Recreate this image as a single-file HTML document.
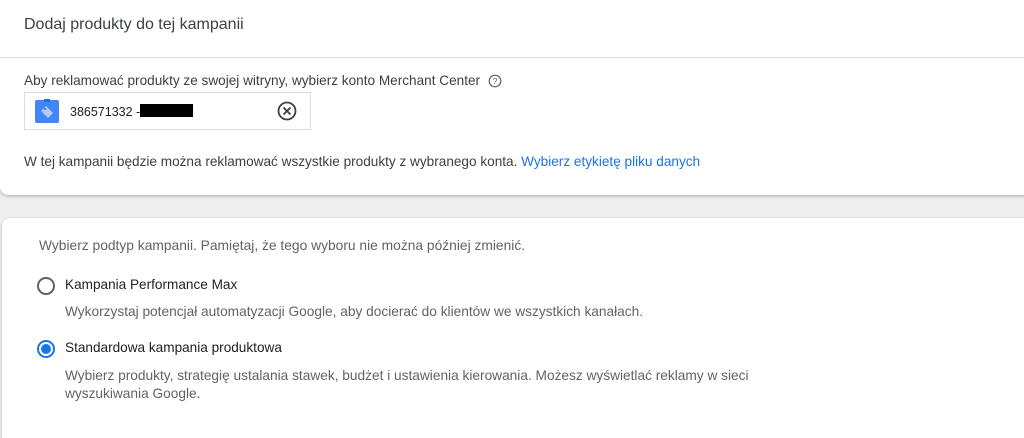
<!DOCTYPE html>
<html><head><meta charset="utf-8"><style>
body{margin:0;width:1024px;height:423px;background:#eeeff1;font-family:"Liberation Sans",Arial,sans-serif;overflow:hidden;position:relative;color:#3c4043}
.c1{position:absolute;left:0;top:0;width:1026px;height:195px;background:#fff;border-radius:0 0 0 8px;box-shadow:0 1px 3px rgba(0,0,0,.3)}
.c2{position:absolute;left:2px;top:218px;width:1030px;height:220px;background:#fff;border-radius:8px 0 0 0;box-shadow:0 1px 3px rgba(0,0,0,.25)}
.t{position:absolute;white-space:nowrap}
</style></head><body>
<div class="c1">
<div class="t" style="left:24px;top:16px;font-size:16px;color:#3c4043">Dodaj produkty do tej kampanii</div>
<div style="position:absolute;left:0;top:57px;width:1026px;height:1px;background:#e0e0e0"></div>
<div class="t" style="left:24px;top:73px;font-size:13.6px">Aby reklamować produkty ze swojej witryny, wybierz konto Merchant Center</div>
<svg style="position:absolute;left:488px;top:74px" width="14" height="14" viewBox="0 0 14 14"><circle cx="7" cy="7" r="5.8" fill="none" stroke="#5f6368" stroke-width="1.2"/><text x="7" y="10.2" font-size="8.5" text-anchor="middle" fill="#5f6368" font-family="Liberation Sans">?</text></svg>
<div style="position:absolute;left:24px;top:92px;width:287px;height:38px;border:1px solid #dadce0;box-sizing:border-box"></div>
<svg style="position:absolute;left:35px;top:99px" width="25" height="24" viewBox="0 0 25 24"><rect x="0" y="1" width="24" height="23" rx="2" fill="#4285f4"/><rect x="9" y="0" width="6" height="3" fill="#1a73e8"/><path d="M6 12 L11 7 L18 14 L13 19 Z" fill="#aecbfa"/><circle cx="10" cy="10" r="1.2" fill="#4285f4"/></svg>
<div class="t" style="left:70px;top:105px;font-size:12.5px;color:#202124">386571332 -</div>
<div style="position:absolute;left:140px;top:104px;width:53px;height:13px;background:#000"></div>
<svg style="position:absolute;left:277px;top:101px" width="20" height="20" viewBox="0 0 20 20"><circle cx="10" cy="10" r="8.5" fill="none" stroke="#3c4043" stroke-width="1.8"/><path d="M6.5 6.5 L13.5 13.5 M13.5 6.5 L6.5 13.5" stroke="#3c4043" stroke-width="1.8"/></svg>
<div class="t" style="left:24px;top:154px;font-size:13.6px">W tej kampanii będzie można reklamować wszystkie produkty z wybranego konta. <span style="color:#1a73e8">Wybierz etykietę pliku danych</span></div>
</div>
<div class="c2">
<div class="t" style="left:37px;top:20px;font-size:13.8px;color:#5f6368">Wybierz podtyp kampanii. Pamiętaj, że tego wyboru nie można później zmienić.</div>
<div style="position:absolute;left:35px;top:59px;width:18px;height:18px;border:2px solid #5f6368;border-radius:50%;box-sizing:border-box"></div>
<div class="t" style="left:63px;top:59px;font-size:13.6px;color:#202124">Kampania Performance Max</div>
<div class="t" style="left:63px;top:86px;font-size:13.7px;color:#5f6368">Wykorzystaj potencjał automatyzacji Google, aby docierać do klientów we wszystkich kanałach.</div>
<div style="position:absolute;left:35px;top:122px;width:18px;height:18px;border:2px solid #1a73e8;border-radius:50%;box-sizing:border-box"></div>
<div style="position:absolute;left:39px;top:126px;width:10px;height:10px;background:#1a73e8;border-radius:50%"></div>
<div class="t" style="left:63px;top:122px;font-size:13.6px;color:#202124">Standardowa kampania produktowa</div>
<div class="t" style="left:63px;top:149px;font-size:13.7px;color:#5f6368;line-height:18px">Wybierz produkty, strategię ustalania stawek, budżet i ustawienia kierowania. Możesz wyświetlać reklamy w sieci<br>wyszukiwania Google.</div>
</div>
</body></html>
